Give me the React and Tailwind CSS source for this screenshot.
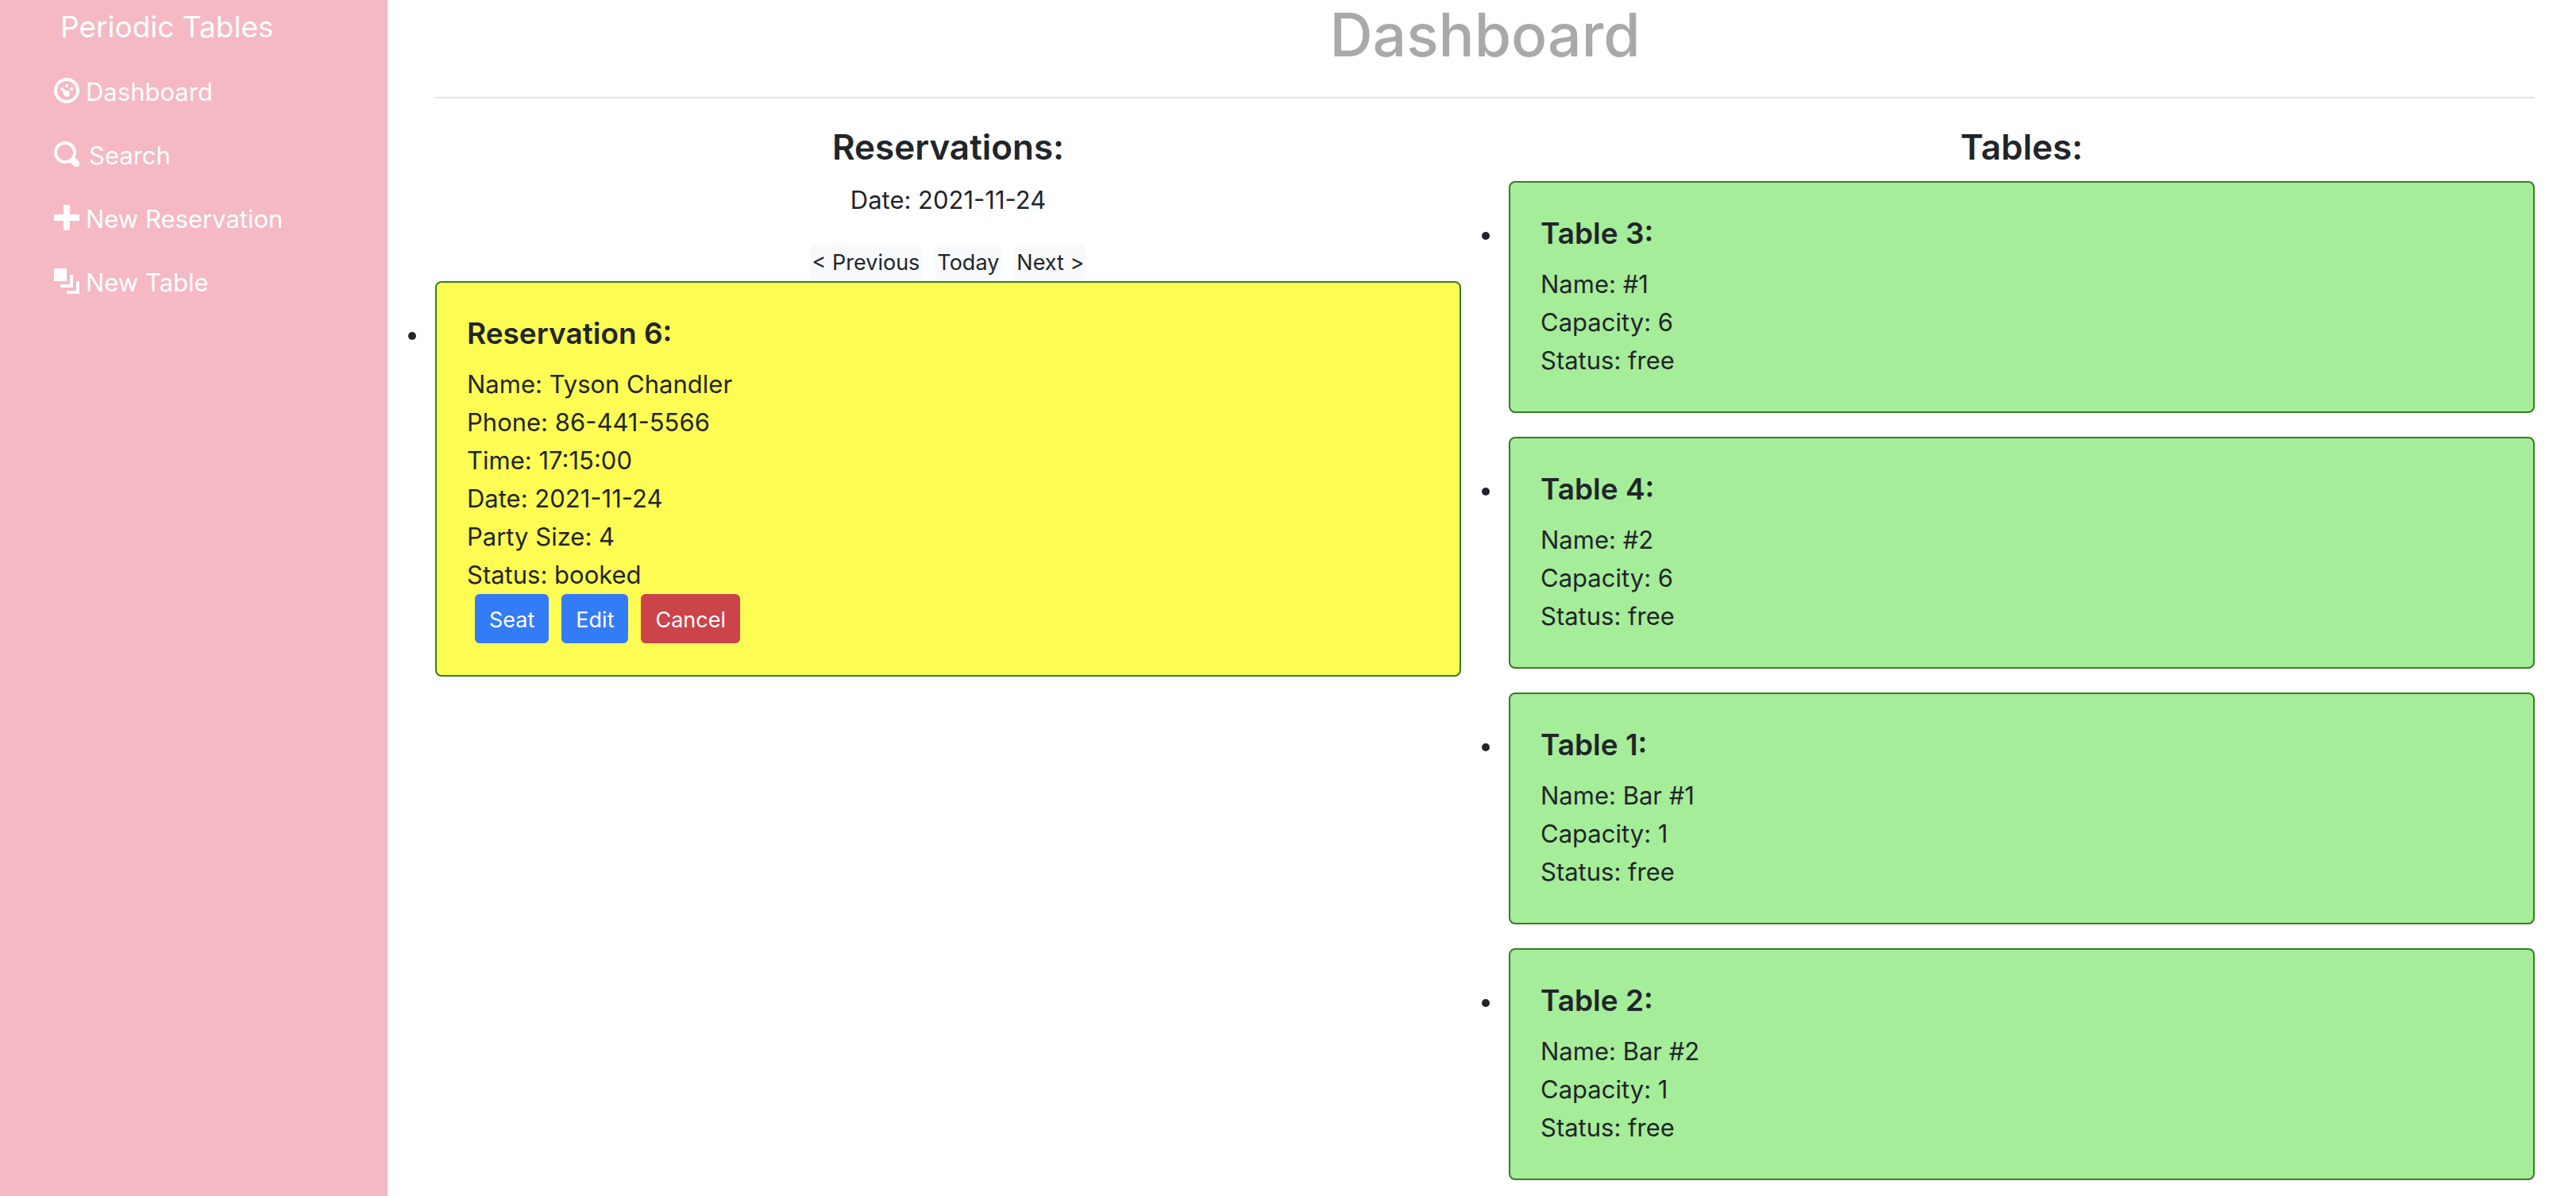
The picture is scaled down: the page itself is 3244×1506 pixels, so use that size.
import React from "react";

const ICONS = {
  dashboard: (
    <>
      <circle cx="4" cy="4" r="3.5" fill="none" stroke="currentColor" strokeWidth="1" />
      <circle cx="4" cy="2.5" r="0.5" />
      <circle cx="5.5" cy="3.5" r="0.5" />
      <circle cx="4" cy="5" r="1" />
      <path d="M2.5 3.45L4 4.9" fill="none" stroke="currentColor" strokeWidth="0.9" strokeLinecap="round" />
    </>
  ),
  search: (
    <path d="M3.5 0c-1.93 0-3.5 1.57-3.5 3.5s1.57 3.5 3.5 3.5c.59 0 1.17-.14 1.66-.41a1 1 0 0 0 .13.13l1 1a1.02 1.02 0 1 0 1.44-1.44l-1-1a1 1 0 0 0-.16-.13c.27-.49.44-1.06.44-1.66 0-1.93-1.55-3.5-3.5-3.5zm0 1c1.39 0 2.5 1.11 2.5 2.5 0 .66-.24 1.27-.66 1.72l-.03.03a1 1 0 0 0-.13.13c-.44.4-1.04.63-1.69.63-1.39 0-2.5-1.11-2.5-2.5s1.11-2.5 2.5-2.5z" />
  ),
  plus: <path d="M3 0v3h-3v2h3v3h2v-3h3v-2h-3v-3h-2z" />,
  layers: <path d="M0 0v4h4v-4h-4zm5 2v3h-3v1h4v-4h-1zm2 2v3h-3v1h4v-4h-1z" />,
};

const NAV = [
  { icon: "dashboard", label: "Dashboard", gap: "gap-2" },
  { icon: "search", label: "Search", gap: "gap-3" },
  { icon: "plus", label: "New Reservation", gap: "gap-2" },
  { icon: "layers", label: "New Table", gap: "gap-2" },
];

const RESERVATION = [
  "Name: Tyson Chandler",
  "Phone: 86-441-5566",
  "Time: 17:15:00",
  "Date: 2021-11-24",
  "Party Size: 4",
  "Status: booked",
];

const TABLES = [
  { id: 3, name: "#1", capacity: 6 },
  { id: 4, name: "#2", capacity: 6 },
  { id: 1, name: "Bar #1", capacity: 1 },
  { id: 2, name: "Bar #2", capacity: 1 },
];

function NavLink({ icon, label, gap }) {
  return (
    <li>
      <a href="#" className={`flex items-center px-1 py-4 leading-[48px] ${gap}`}>
        <svg viewBox="0 0 8 8" className="mb-1 size-8 shrink-0" fill="currentColor" aria-hidden="true">
          {ICONS[icon]}
        </svg>
        {label}
      </a>
    </li>
  );
}

function Card({ color, title, lines, children }) {
  return (
    <li className="flex">
      <span className="-ml-[34px] mt-16 mr-6 size-2.5 shrink-0 rounded-full bg-[#212529]" />
      <article className={`flex-1 rounded-lg border-2 border-[#377d22] px-[38px] py-10 ${color}`}>
        <h5 className="mb-4 text-[37px] leading-[48px] font-semibold">{title}</h5>
        {lines.map((line) => (
          <p key={line}>{line}</p>
        ))}
        {children}
      </article>
    </li>
  );
}

function ActionButton({ color, children }) {
  return (
    <button type="button" className={`rounded-md px-[18px] pt-3 pb-2 text-[27px] leading-[42px] text-white ${color}`}>
      {children}
    </button>
  );
}

function DateButton({ children }) {
  return (
    <button type="button" className="rounded-md bg-[#f8f9fa] px-[3px] pt-0.5 text-[27px] leading-[42px]">
      {children}
    </button>
  );
}

export default function App() {
  return (
    <div className="flex min-h-screen bg-white font-['Inter',sans-serif] text-[31px] leading-[48px] text-[#212529]">
      <nav className="w-[488px] shrink-0 bg-[#f5b9c4] px-16 text-white">
        <a href="#" className="mb-3 block px-3 pt-1 text-[37px] leading-[60px]">
          Periodic Tables
        </a>
        <ul>
          {NAV.map((item) => (
            <NavLink key={item.label} {...item} />
          ))}
        </ul>
      </nav>
      <main className="min-w-0 flex-1 pr-[52px] pl-[60px]">
        <h1 className="pt-0.5 pb-9 text-center text-[75px] leading-[84px] font-medium text-[#a9a9a9]">Dashboard</h1>
        <hr className="mb-8 border-t-2 border-[#e5e5e5]" />
        <div className="grid grid-cols-2 gap-[60px]">
          <section>
            <h3 className="mb-3.5 text-center text-[44px] leading-[58px] font-semibold">Reservations:</h3>
            <p className="mb-8 text-center">Date: 2021-11-24</p>
            <div className="mb-0.5 flex justify-center gap-4">
              <DateButton>&lt; Previous</DateButton>
              <DateButton>Today</DateButton>
              <DateButton>Next &gt;</DateButton>
            </div>
            <ul>
              <Card color="bg-[#fffd54]" title="Reservation 6:" lines={RESERVATION}>
                <div className="ml-2.5 flex gap-4">
                  <ActionButton color="bg-[#347cf6]">Seat</ActionButton>
                  <ActionButton color="bg-[#347cf6]">Edit</ActionButton>
                  <ActionButton color="bg-[#ca444a]">Cancel</ActionButton>
                </div>
              </Card>
            </ul>
          </section>
          <section>
            <h3 className="mb-3.5 text-center text-[44px] leading-[58px] font-semibold">Tables:</h3>
            <ul className="flex flex-col gap-[30px]">
              {TABLES.map(({ id, name, capacity }) => (
                <Card
                  key={id}
                  color="bg-[#a5ed99]"
                  title={`Table ${id}:`}
                  lines={[`Name: ${name}`, `Capacity: ${capacity}`, "Status: free"]}
                />
              ))}
            </ul>
          </section>
        </div>
      </main>
    </div>
  );
}
